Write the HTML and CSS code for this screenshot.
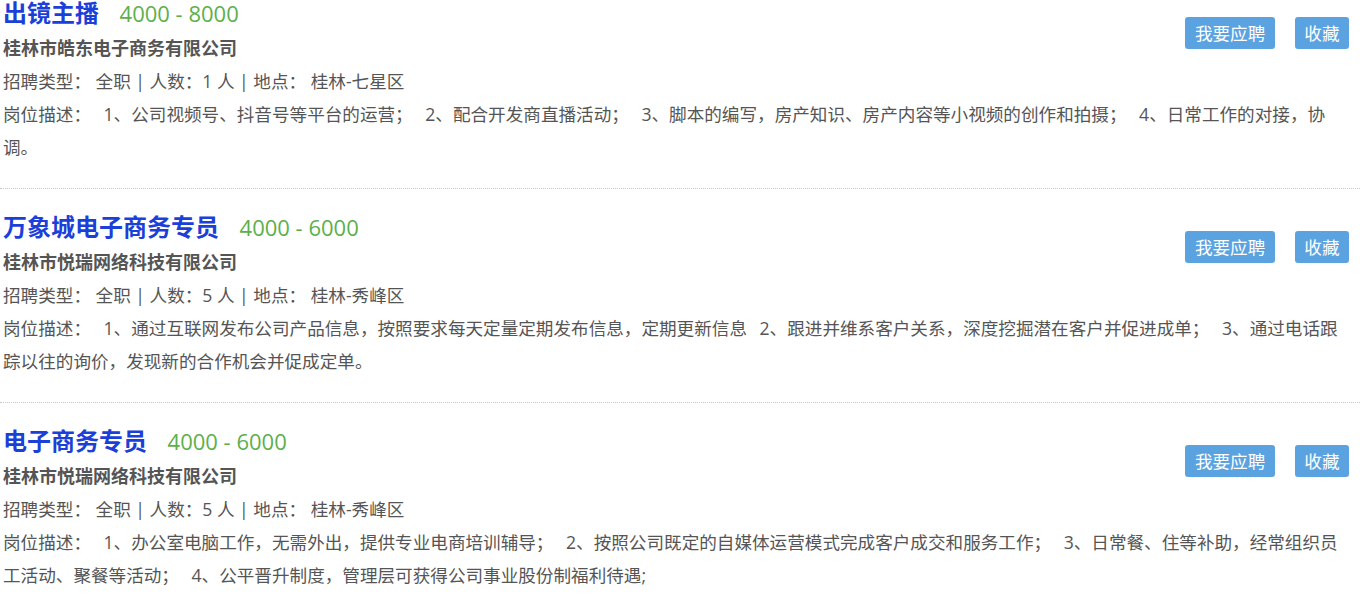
FILE: index.html
```html
<!DOCTYPE html>
<html lang="zh-CN">
<head>
    <meta charset="UTF-8">
    <meta name="viewport" content="width=device-width, initial-scale=1.0">
    <title>职位列表</title>
    <link rel="stylesheet" href="styles.css">
</head>
<body>

<div class="job-list">
    <div class="job-item">
        <div class="job-actions">
            <a class="btn" href="#">我要应聘</a>
            <a class="btn" href="#">收藏</a>
        </div>
        <div class="job-title">
            <a href="#">出镜主播</a>
            <span class="salary">4000 - 8000</span>
        </div>
        <div class="company">桂林市皓东电子商务有限公司</div>
        <div class="job-info">招聘类型： 全职 | 人数：1 人 | 地点： 桂林-七星区</div>
        <div class="job-desc">岗位描述： 1、公司视频号、抖音号等平台的运营； 2、配合开发商直播活动； 3、脚本的编写，房产知识、房产内容等小视频的创作和拍摄； 4、日常工作的对接，协调。</div>
    </div>

    <div class="job-item">
        <div class="job-actions">
            <a class="btn" href="#">我要应聘</a>
            <a class="btn" href="#">收藏</a>
        </div>
        <div class="job-title">
            <a href="#">万象城电子商务专员</a>
            <span class="salary">4000 - 6000</span>
        </div>
        <div class="company">桂林市悦瑞网络科技有限公司</div>
        <div class="job-info">招聘类型： 全职 | 人数：5 人 | 地点： 桂林-秀峰区</div>
        <div class="job-desc">岗位描述： 1、通过互联网发布公司产品信息，按照要求每天定量定期发布信息，定期更新信息 2、跟进并维系客户关系，深度挖掘潜在客户并促进成单； 3、通过电话跟踪以往的询价，发现新的合作机会并促成定单。</div>
    </div>

    <div class="job-item">
        <div class="job-actions">
            <a class="btn" href="#">我要应聘</a>
            <a class="btn" href="#">收藏</a>
        </div>
        <div class="job-title">
            <a href="#">电子商务专员</a>
            <span class="salary">4000 - 6000</span>
        </div>
        <div class="company">桂林市悦瑞网络科技有限公司</div>
        <div class="job-info">招聘类型： 全职 | 人数：5 人 | 地点： 桂林-秀峰区</div>
        <div class="job-desc">岗位描述： 1、办公室电脑工作，无需外出，提供专业电商培训辅导； 2、按照公司既定的自媒体运营模式完成客户成交和服务工作； 3、日常餐、住等补助，经常组织员工活动、聚餐等活动； 4、公平晋升制度，管理层可获得公司事业股份制福利待遇;</div>
    </div>
</div>

</body>
</html>
```

FILE: styles.css
```css
html, body {
    overflow: hidden;
}
body {
    margin: 0;
    background-color: #fff;
    font-family: "Open Sans", "Noto Sans CJK SC", sans-serif;
    font-size: 17.6px;
    color: #555;
}
.job-list {
    margin-top: -25px;
}
.job-item {
    padding: 21px 11px 24px 3px;
    line-height: 33px;
    border-bottom: 1px dotted #c8c8c8;
}
.job-actions {
    float: right;
    display: flex;
    gap: 20px;
    margin-top: 21px;
}
.btn {
    display: block;
    height: 32px;
    line-height: 32px;
    padding: 0 9.5px;
    background-color: #5ba3e0;
    color: #fff;
    border-radius: 3px;
    text-decoration: none;
    font-size: 17.6px;
}
.job-title a {
    font-size: 24px;
    font-weight: bold;
    color: #1b3fd8;
    text-decoration: none;
}
.salary {
    margin-left: 16px;
    font-size: 22px;
    color: #5cb04a;
}
.company {
    font-size: 18px;
    font-weight: bold;
    color: #555;
}
.job-desc {
    word-spacing: 8px;
}
```
